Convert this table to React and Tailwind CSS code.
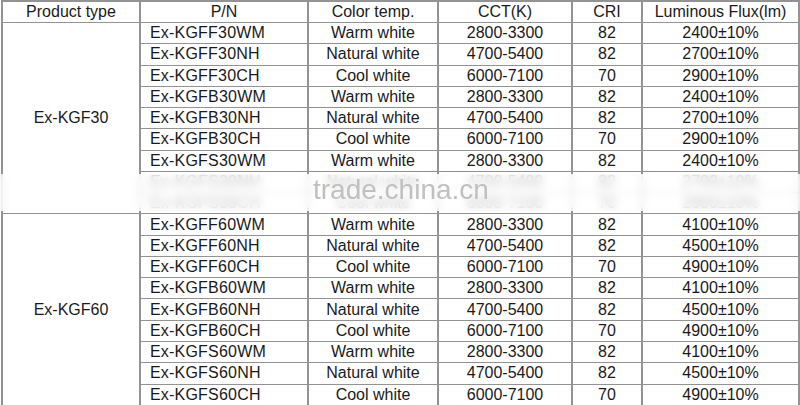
import React from "react";

const groups = [
  {
    name: "Ex-KGF30",
    rows: [
      ["Ex-KGFF30WM", "Warm white", "2800-3300", "82", "2400±10%"],
      ["Ex-KGFF30NH", "Natural white", "4700-5400", "82", "2700±10%"],
      ["Ex-KGFF30CH", "Cool white", "6000-7100", "70", "2900±10%"],
      ["Ex-KGFB30WM", "Warm white", "2800-3300", "82", "2400±10%"],
      ["Ex-KGFB30NH", "Natural white", "4700-5400", "82", "2700±10%"],
      ["Ex-KGFB30CH", "Cool white", "6000-7100", "70", "2900±10%"],
      ["Ex-KGFS30WM", "Warm white", "2800-3300", "82", "2400±10%"],
      ["Ex-KGFS30NH", "Natural white", "4700-5400", "82", "2700±10%"],
      ["Ex-KGFS30CH", "Cool white", "6000-7100", "70", "2900±10%"],
    ],
  },
  {
    name: "Ex-KGF60",
    rows: [
      ["Ex-KGFF60WM", "Warm white", "2800-3300", "82", "4100±10%"],
      ["Ex-KGFF60NH", "Natural white", "4700-5400", "82", "4500±10%"],
      ["Ex-KGFF60CH", "Cool white", "6000-7100", "70", "4900±10%"],
      ["Ex-KGFB60WM", "Warm white", "2800-3300", "82", "4100±10%"],
      ["Ex-KGFB60NH", "Natural white", "4700-5400", "82", "4500±10%"],
      ["Ex-KGFB60CH", "Cool white", "6000-7100", "70", "4900±10%"],
      ["Ex-KGFS60WM", "Warm white", "2800-3300", "82", "4100±10%"],
      ["Ex-KGFS60NH", "Natural white", "4700-5400", "82", "4500±10%"],
      ["Ex-KGFS60CH", "Cool white", "6000-7100", "70", "4900±10%"],
    ],
  },
];

const cell = "bg-white flex items-center justify-center whitespace-nowrap";

export default function App() {
  let rowIndex = 2;
  return (
    <div
      className="relative w-[800px] h-[405px] overflow-hidden bg-white text-[#1a1a1a] text-[16px] leading-none"
      style={{ fontFamily: '"Liberation Sans", Arial, sans-serif' }}
    >
      <div className="ml-[1px] w-[799px] bg-[#939393] pt-[2px] pl-[2px] pr-[2px] grid grid-cols-[136px_166px_128px_132px_68px_155px] grid-rows-[20px_repeat(18,20.28px)] gap-x-[2px] gap-y-[1px]">
        <div className={cell}>Product type</div>
        <div className={cell}>P/N</div>
        <div className={cell}>Color temp.</div>
        <div className={cell}>CCT(K)</div>
        <div className={cell}>CRI</div>
        <div className={cell}>Luminous Flux(lm)</div>
        {groups.map((g, gi) => {
          const start = rowIndex;
          rowIndex += g.rows.length;
          return (
            <React.Fragment key={gi}>
              <div
                className={cell + " col-start-1"}
                style={{ gridRow: `${start} / span ${g.rows.length}` }}
              >
                {g.name}
              </div>
              {g.rows.map((r, ri) => (
                <React.Fragment key={ri}>
                  <div
                    className="bg-white flex items-center pl-[9px] whitespace-nowrap col-start-2 tracking-[0.2px]"
                    style={{ gridRow: `${start + ri}` }}
                  >
                    {r[0]}
                  </div>
                  <div className={cell} style={{ gridRow: `${start + ri}` }}>{r[1]}</div>
                  <div className={cell} style={{ gridRow: `${start + ri}` }}>{r[2]}</div>
                  <div className={cell} style={{ gridRow: `${start + ri}` }}>{r[3]}</div>
                  <div className={cell} style={{ gridRow: `${start + ri}` }}>{r[4]}</div>
                </React.Fragment>
              ))}
            </React.Fragment>
          );
        })}
      </div>
      <div className="absolute left-0 right-0 top-[174px] h-[37px] backdrop-blur-[4px] bg-white/75" />
      <div className="absolute left-[313px] top-[176px] text-[28px] leading-none text-[#c0c0c0]">
        trade.china.cn
      </div>
    </div>
  );
}
